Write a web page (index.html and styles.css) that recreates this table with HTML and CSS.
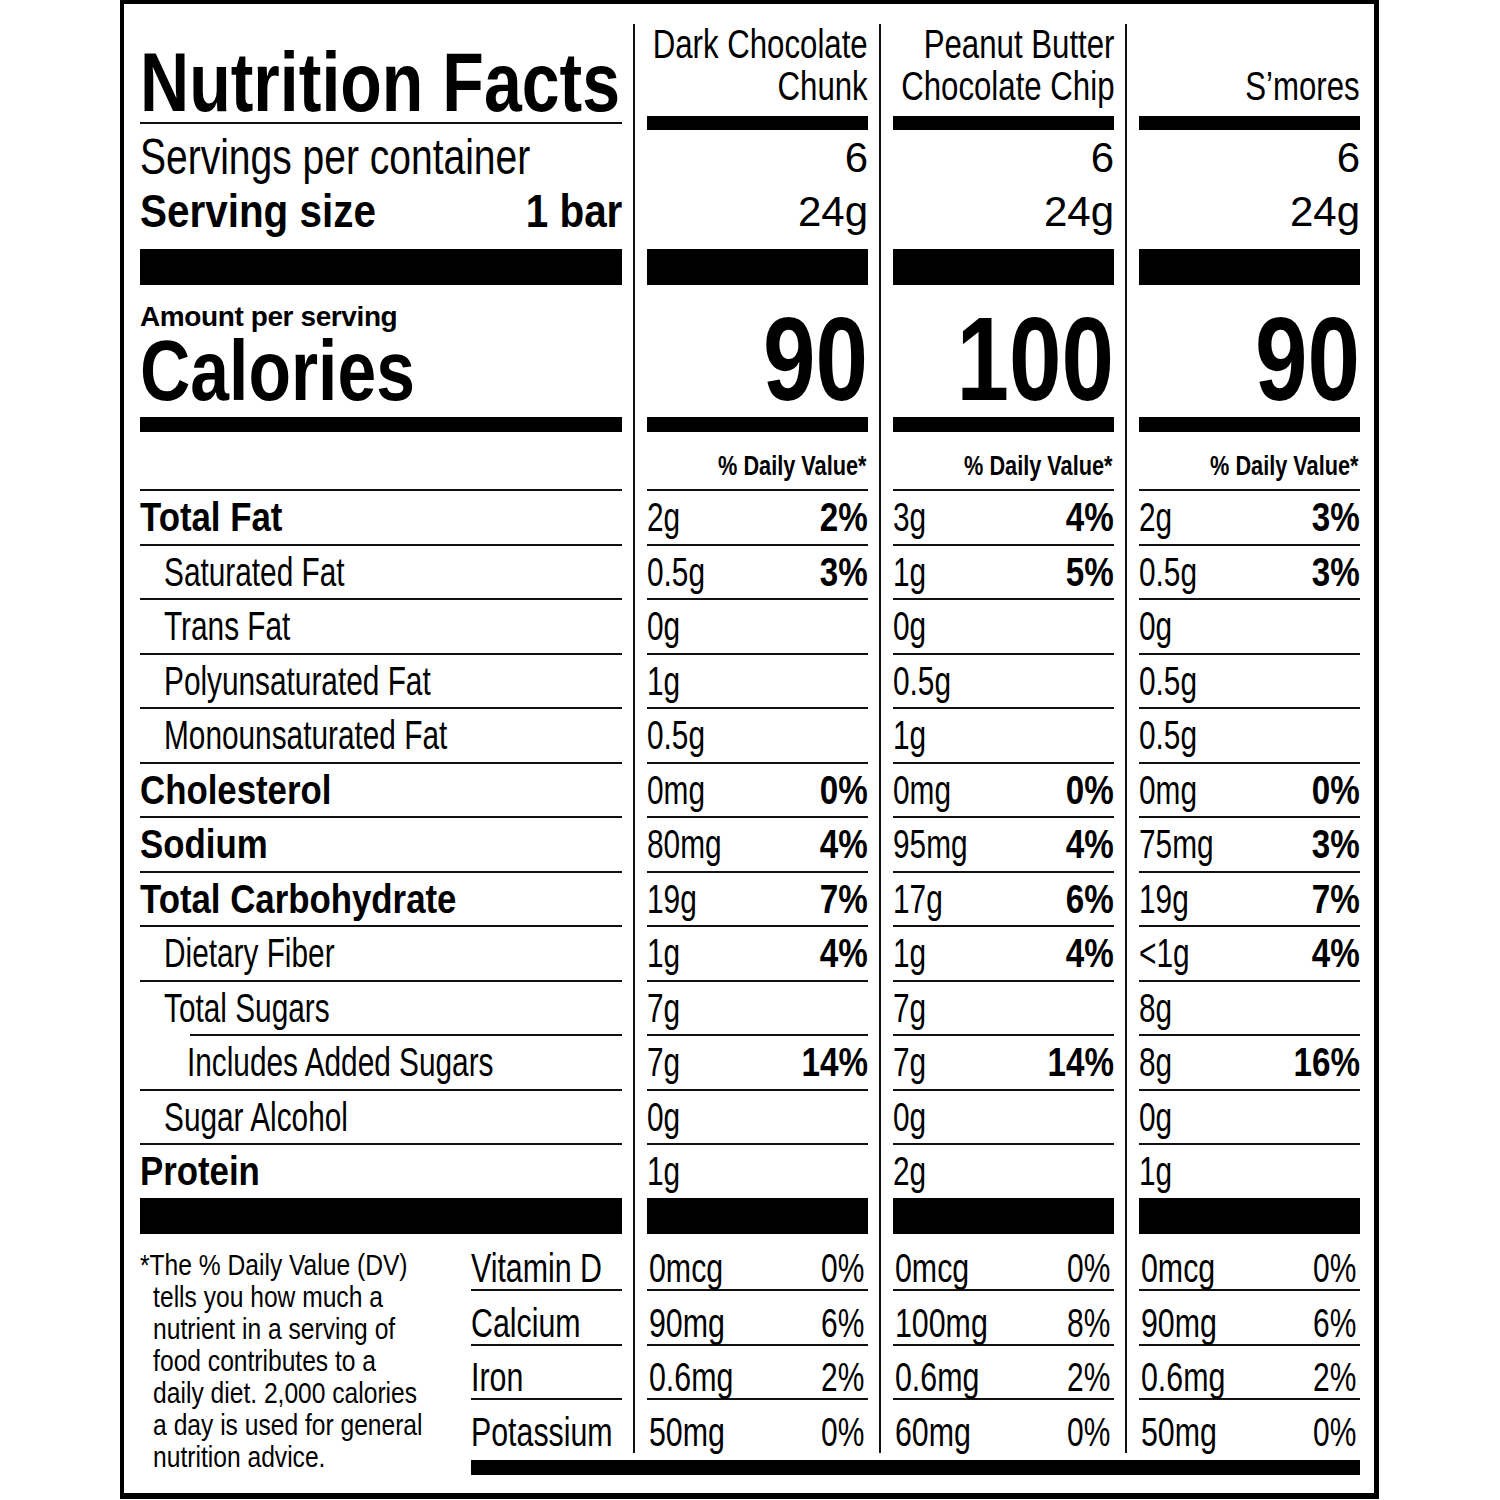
FILE: index.html
```html
<!DOCTYPE html>
<html lang="en">
<head>
<meta charset="utf-8">
<title>Nutrition Facts</title>
<link rel="stylesheet" href="styles.css">
</head>
<body>
<div class="label">
  <div class="cols">
    <section class="col col-main">
      <div class="title-box"><h1 class="title">Nutrition Facts</h1></div>
      <div class="serv-main">
        <div class="servings">Servings per container</div>
        <div class="size"><span class="sz-label">Serving size</span><span class="sz-val">1 bar</span></div>
      </div>
      <div class="bar bar-thick"></div>
      <div class="cal-main">
        <div class="amount">Amount per serving</div>
        <div class="calories">Calories</div>
      </div>
      <div class="bar bar-med"></div>
      <div class="dv"></div>
      <div class="row b"><span class="lbl">Total Fat</span></div>
      <div class="row i1"><span class="lbl">Saturated Fat</span></div>
      <div class="row i1"><span class="lbl">Trans Fat</span></div>
      <div class="row i1"><span class="lbl">Polyunsaturated Fat</span></div>
      <div class="row i1"><span class="lbl">Monounsaturated Fat</span></div>
      <div class="row b"><span class="lbl">Cholesterol</span></div>
      <div class="row b"><span class="lbl">Sodium</span></div>
      <div class="row b"><span class="lbl">Total Carbohydrate</span></div>
      <div class="row i1"><span class="lbl">Dietary Fiber</span></div>
      <div class="row i1 short"><span class="lbl">Total Sugars</span></div>
      <div class="row i2"><span class="lbl">Includes Added Sugars</span></div>
      <div class="row i1"><span class="lbl">Sugar Alcohol</span></div>
      <div class="row b last"><span class="lbl">Protein</span></div>
      <div class="bar bar-thick"></div>
      <div class="vit-main">
        <p class="footnote">*The % Daily Value (DV)<br>tells you how much a<br>nutrient in a serving of<br>food contributes to a<br>daily diet. 2,000 calories<br>a day is used for general<br>nutrition advice.</p>
        <div class="vit-names">
          <div class="vrow"><span class="vl">Vitamin D</span></div>
          <div class="vrow"><span class="vl">Calcium</span></div>
          <div class="vrow"><span class="vl">Iron</span></div>
          <div class="vrow"><span class="vl">Potassium</span></div>
        </div>
      </div>
    </section>

    <section class="col col-prod">
      <div class="name"><div class="name-text">Dark Chocolate<br>Chunk</div></div>
      <div class="bar bar-thin"></div>
      <div class="serv"><div>6</div><div>24g</div></div>
      <div class="bar bar-thick"></div>
      <div class="cal"><div class="cal-num">90</div></div>
      <div class="bar bar-med"></div>
      <div class="dv"><span>% Daily Value*</span></div>
      <div class="row"><span class="amt">2g</span><span class="pct">2%</span></div>
      <div class="row"><span class="amt">0.5g</span><span class="pct">3%</span></div>
      <div class="row"><span class="amt">0g</span></div>
      <div class="row"><span class="amt">1g</span></div>
      <div class="row"><span class="amt">0.5g</span></div>
      <div class="row"><span class="amt">0mg</span><span class="pct">0%</span></div>
      <div class="row"><span class="amt">80mg</span><span class="pct">4%</span></div>
      <div class="row"><span class="amt">19g</span><span class="pct">7%</span></div>
      <div class="row"><span class="amt">1g</span><span class="pct">4%</span></div>
      <div class="row"><span class="amt">7g</span></div>
      <div class="row"><span class="amt">7g</span><span class="pct">14%</span></div>
      <div class="row"><span class="amt">0g</span></div>
      <div class="row last"><span class="amt">1g</span></div>
      <div class="bar bar-thick"></div>
      <div class="vit">
        <div class="vrow"><span class="vl">0mcg</span><span class="vr">0%</span></div>
        <div class="vrow"><span class="vl">90mg</span><span class="vr">6%</span></div>
        <div class="vrow"><span class="vl">0.6mg</span><span class="vr">2%</span></div>
        <div class="vrow"><span class="vl">50mg</span><span class="vr">0%</span></div>
      </div>
    </section>

    <section class="col col-prod">
      <div class="name"><div class="name-text">Peanut Butter<br>Chocolate Chip</div></div>
      <div class="bar bar-thin"></div>
      <div class="serv"><div>6</div><div>24g</div></div>
      <div class="bar bar-thick"></div>
      <div class="cal"><div class="cal-num">100</div></div>
      <div class="bar bar-med"></div>
      <div class="dv"><span>% Daily Value*</span></div>
      <div class="row"><span class="amt">3g</span><span class="pct">4%</span></div>
      <div class="row"><span class="amt">1g</span><span class="pct">5%</span></div>
      <div class="row"><span class="amt">0g</span></div>
      <div class="row"><span class="amt">0.5g</span></div>
      <div class="row"><span class="amt">1g</span></div>
      <div class="row"><span class="amt">0mg</span><span class="pct">0%</span></div>
      <div class="row"><span class="amt">95mg</span><span class="pct">4%</span></div>
      <div class="row"><span class="amt">17g</span><span class="pct">6%</span></div>
      <div class="row"><span class="amt">1g</span><span class="pct">4%</span></div>
      <div class="row"><span class="amt">7g</span></div>
      <div class="row"><span class="amt">7g</span><span class="pct">14%</span></div>
      <div class="row"><span class="amt">0g</span></div>
      <div class="row last"><span class="amt">2g</span></div>
      <div class="bar bar-thick"></div>
      <div class="vit">
        <div class="vrow"><span class="vl">0mcg</span><span class="vr">0%</span></div>
        <div class="vrow"><span class="vl">100mg</span><span class="vr">8%</span></div>
        <div class="vrow"><span class="vl">0.6mg</span><span class="vr">2%</span></div>
        <div class="vrow"><span class="vl">60mg</span><span class="vr">0%</span></div>
      </div>
    </section>

    <section class="col col-prod">
      <div class="name"><div class="name-text">S’mores</div></div>
      <div class="bar bar-thin"></div>
      <div class="serv"><div>6</div><div>24g</div></div>
      <div class="bar bar-thick"></div>
      <div class="cal"><div class="cal-num">90</div></div>
      <div class="bar bar-med"></div>
      <div class="dv"><span>% Daily Value*</span></div>
      <div class="row"><span class="amt">2g</span><span class="pct">3%</span></div>
      <div class="row"><span class="amt">0.5g</span><span class="pct">3%</span></div>
      <div class="row"><span class="amt">0g</span></div>
      <div class="row"><span class="amt">0.5g</span></div>
      <div class="row"><span class="amt">0.5g</span></div>
      <div class="row"><span class="amt">0mg</span><span class="pct">0%</span></div>
      <div class="row"><span class="amt">75mg</span><span class="pct">3%</span></div>
      <div class="row"><span class="amt">19g</span><span class="pct">7%</span></div>
      <div class="row"><span class="amt">&lt;1g</span><span class="pct">4%</span></div>
      <div class="row"><span class="amt">8g</span></div>
      <div class="row"><span class="amt">8g</span><span class="pct">16%</span></div>
      <div class="row"><span class="amt">0g</span></div>
      <div class="row last"><span class="amt">1g</span></div>
      <div class="bar bar-thick"></div>
      <div class="vit">
        <div class="vrow"><span class="vl">0mcg</span><span class="vr">0%</span></div>
        <div class="vrow"><span class="vl">90mg</span><span class="vr">6%</span></div>
        <div class="vrow"><span class="vl">0.6mg</span><span class="vr">2%</span></div>
        <div class="vrow"><span class="vl">50mg</span><span class="vr">0%</span></div>
      </div>
    </section>
  </div>
  <div class="bottom-bar"></div>
</div>
</body>
</html>
```

FILE: styles.css
```css
* {
  box-sizing: border-box;
  margin: 0;
  padding: 0;
}

html, body {
  background: #fff;
}

body {
  margin: 0;
  font-family: "Liberation Sans", Arial, Helvetica, sans-serif;
  color: #000;
}

.label {
  margin-left: 120px;
  width: 1259px;
  border: 4px solid #000;
  border-right-width: 5px;
  border-bottom-width: 6px;
  padding: 20px 14px 18px 16px;
}

.cols {
  display: flex;
}

.col-main {
  width: 482px;
  flex: none;
}

.col-prod {
  width: 235px;
  flex: none;
  margin-left: 11px;
  padding-left: 12px;
  border-left: 2px solid #111;
}

.bar {
  background: #000;
}

.bar-thin { height: 14px; }
.bar-thick { height: 36px; }
.bar-med { height: 15px; }

/* ---------- left column header ---------- */
.title-box {
  height: 100px;
  padding-top: 18px;
  border-bottom: 2px solid #111;
}

.title {
  font-size: 84px;
  line-height: 80px;
  font-weight: 700;
  white-space: nowrap;
  transform: scaleX(0.81);
  transform-origin: left center;
}

.serv-main {
  height: 125px;
  padding-top: 6px;
}

.servings {
  font-size: 50px;
  line-height: 54px;
  white-space: nowrap;
  transform: scaleX(0.78);
  transform-origin: left center;
}

.size {
  display: flex;
  justify-content: space-between;
  font-size: 47px;
  line-height: 54px;
  font-weight: 700;
  white-space: nowrap;
}

.size span {
  display: inline-block;
  transform: scaleX(0.86);
}

.sz-label { transform-origin: left center; }
.sz-val { transform-origin: right center; }

.cal-main {
  height: 132px;
  padding-top: 15px;
}

.amount {
  font-size: 28px;
  line-height: 34px;
  font-weight: 700;
  letter-spacing: -0.4px;
  white-space: nowrap;
}

.calories {
  margin-top: 1px;
  font-size: 86px;
  line-height: 70px;
  font-weight: 700;
  white-space: nowrap;
  transform: scaleX(0.81);
  transform-origin: left center;
}

/* ---------- product column header ---------- */
.name {
  height: 92px;
  display: flex;
  flex-direction: column;
  justify-content: flex-end;
  align-items: flex-end;
  padding-bottom: 9px;
}

.name-text {
  width: max-content;
  flex: none;
  text-align: right;
  font-size: 40px;
  line-height: 42px;
  white-space: nowrap;
  transform: scaleX(0.78);
  transform-origin: right center;
}

.serv {
  height: 119px;
  padding-top: 1px;
  text-align: right;
  font-size: 42px;
  line-height: 54px;
}

.cal {
  height: 132px;
  padding-top: 24px;
}

.cal-num {
  text-align: right;
  font-size: 118px;
  line-height: 100px;
  font-weight: 700;
  white-space: nowrap;
  transform: scaleX(0.8);
  transform-origin: right center;
}

/* ---------- daily value header ---------- */
.dv {
  height: 59px;
  padding-top: 19px;
  padding-right: 2px;
  border-bottom: 2px solid #111;
  text-align: right;
  font-size: 28px;
  line-height: 30px;
  font-weight: 700;
  white-space: nowrap;
}

.dv span {
  display: inline-block;
  transform: scaleX(0.775);
  transform-origin: right center;
}

/* ---------- nutrient rows ---------- */
.row {
  display: flex;
  justify-content: space-between;
  height: 54.5px;
  border-bottom: 2px solid #111;
  font-size: 40px;
  line-height: 52.5px;
  white-space: nowrap;
}

.row.last {
  height: 53px;
  border-bottom: 0;
}

.row.i1 { padding-left: 24px; }
.row.i2 { padding-left: 47px; }

.row.short {
  border-bottom: 0;
  background: linear-gradient(#111, #111) no-repeat right bottom / calc(100% - 50px) 2px;
}

.lbl,
.amt {
  display: inline-block;
  transform: scaleX(0.745);
  transform-origin: left center;
}

.row.b {
  font-weight: 700;
}

.row.b .lbl {
  transform: scaleX(0.87);
}

.pct {
  display: inline-block;
  font-weight: 700;
  transform: scaleX(0.83);
  transform-origin: right center;
}

/* ---------- vitamins / footnote ---------- */
.vit-main {
  display: flex;
  height: 219px;
}

.footnote {
  width: 331px;
  flex: none;
  padding: 15px 0 0 16px;
  text-indent: -16px;
  font-size: 30px;
  line-height: 32px;
  white-space: nowrap;
  transform: scaleX(0.82);
  transform-origin: left top;
}

.vit-names {
  width: 151px;
  flex: none;
}

.vit .vrow {
  padding-left: 2px;
  padding-right: 4px;
}

.vrow {
  display: flex;
  justify-content: space-between;
  align-items: flex-end;
  height: 54.5px;
  padding-bottom: 1px;
  border-bottom: 2px solid #111;
  font-size: 41px;
  line-height: 40px;
  white-space: nowrap;
}

.vrow:first-child { height: 57px; }

.vrow:last-child {
  height: 53px;
  border-bottom: 0;
}

.vl {
  display: inline-block;
  transform: scaleX(0.74);
  transform-origin: left center;
}

.vr {
  display: inline-block;
  transform: scaleX(0.73);
  transform-origin: right center;
}

.bottom-bar {
  margin-left: 331px;
  margin-top: 7px;
  height: 15px;
  background: #000;
}
```
